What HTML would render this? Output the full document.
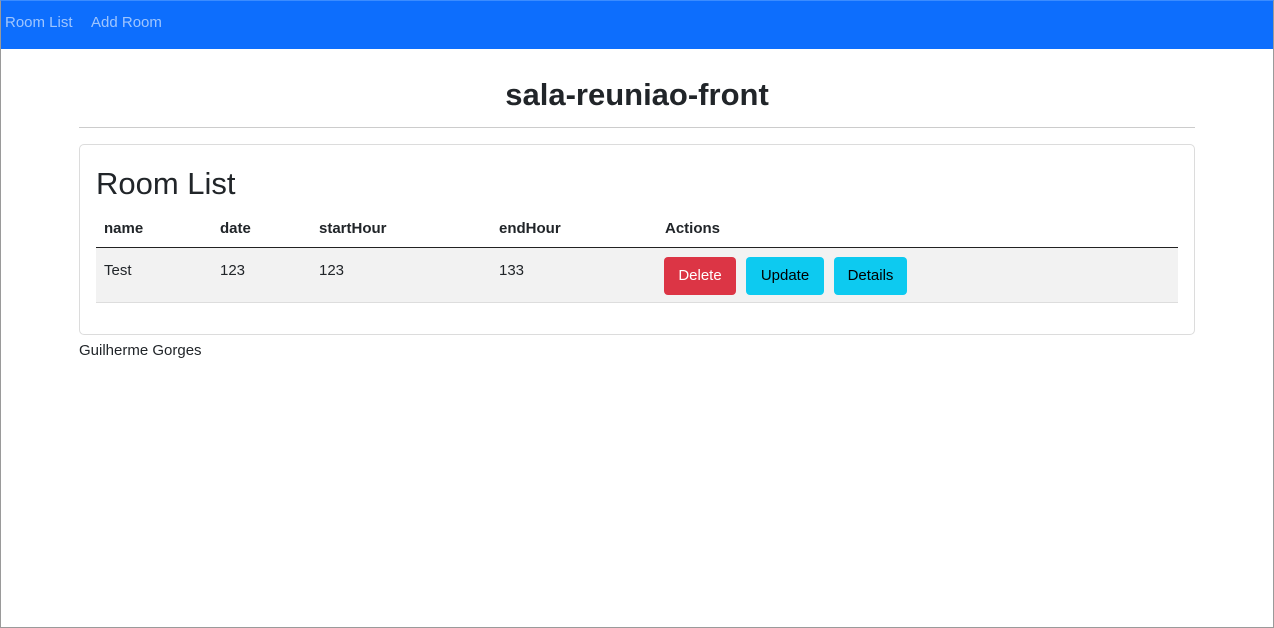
<!DOCTYPE html>
<html><head><meta charset="utf-8"><style>
*{box-sizing:border-box;margin:0;padding:0}
body{width:1274px;height:628px;font-family:"Liberation Sans",sans-serif;font-size:15px;color:#212529;background:#fff;border:1px solid #9a9a9a;border-top:1px solid #3b8cff;position:relative;overflow:hidden}
.nav{position:absolute;left:0;top:0;width:1272px;height:48px;background:#0d6efd}
.nav span{position:absolute;top:13px;color:rgba(255,255,255,.6);font-size:15px}
h1{position:absolute;left:0;width:1272px;top:76px;text-align:center;font-size:31px;font-weight:bold;line-height:36px}
.hr{position:absolute;left:78px;width:1116px;top:126px;height:1px;background:#ccc}
.card{position:absolute;left:78px;top:143px;width:1116px;height:191px;border:1px solid #dcdcdc;border-radius:5px}
h2{position:absolute;left:16px;top:20px;font-size:31px;font-weight:normal;line-height:38px}
.th{position:absolute;top:75px;font-weight:bold}
.line{position:absolute;left:16px;width:1082px;top:102px;height:1px;background:#222}
.row{position:absolute;left:16px;width:1082px;top:103px;height:55px;background:#f2f2f2;border-bottom:1px solid #ddd}
.td{position:absolute;top:117px}
.btn{position:absolute;top:112px;height:38px;border-radius:4px;line-height:38px;text-align:center;font-size:15px}
.foot{position:absolute;left:78px;top:341px}
</style></head><body>
<div class="nav"><span style="left:4px">Room List</span><span style="left:90px">Add Room</span></div>
<h1>sala-reuniao-front</h1>
<div class="hr"></div>
<div class="card">
<h2>Room List</h2>
<div class="th" style="left:24px">name</div>
<div class="th" style="left:140px">date</div>
<div class="th" style="left:239px">startHour</div>
<div class="th" style="left:419px">endHour</div>
<div class="th" style="left:585px">Actions</div>
<div class="line"></div>
<div class="row"></div>
<div class="td" style="left:24px">Test</div>
<div class="td" style="left:140px">123</div>
<div class="td" style="left:239px">123</div>
<div class="td" style="left:419px">133</div>
<div class="btn" style="left:584px;width:72px;background:#dc3545;color:#fff">Delete</div>
<div class="btn" style="left:666px;width:78px;background:#0dcaf0;color:#000">Update</div>
<div class="btn" style="left:754px;width:73px;background:#0dcaf0;color:#000">Details</div>
</div>
<div class="foot">Guilherme Gorges</div>
</body></html>
